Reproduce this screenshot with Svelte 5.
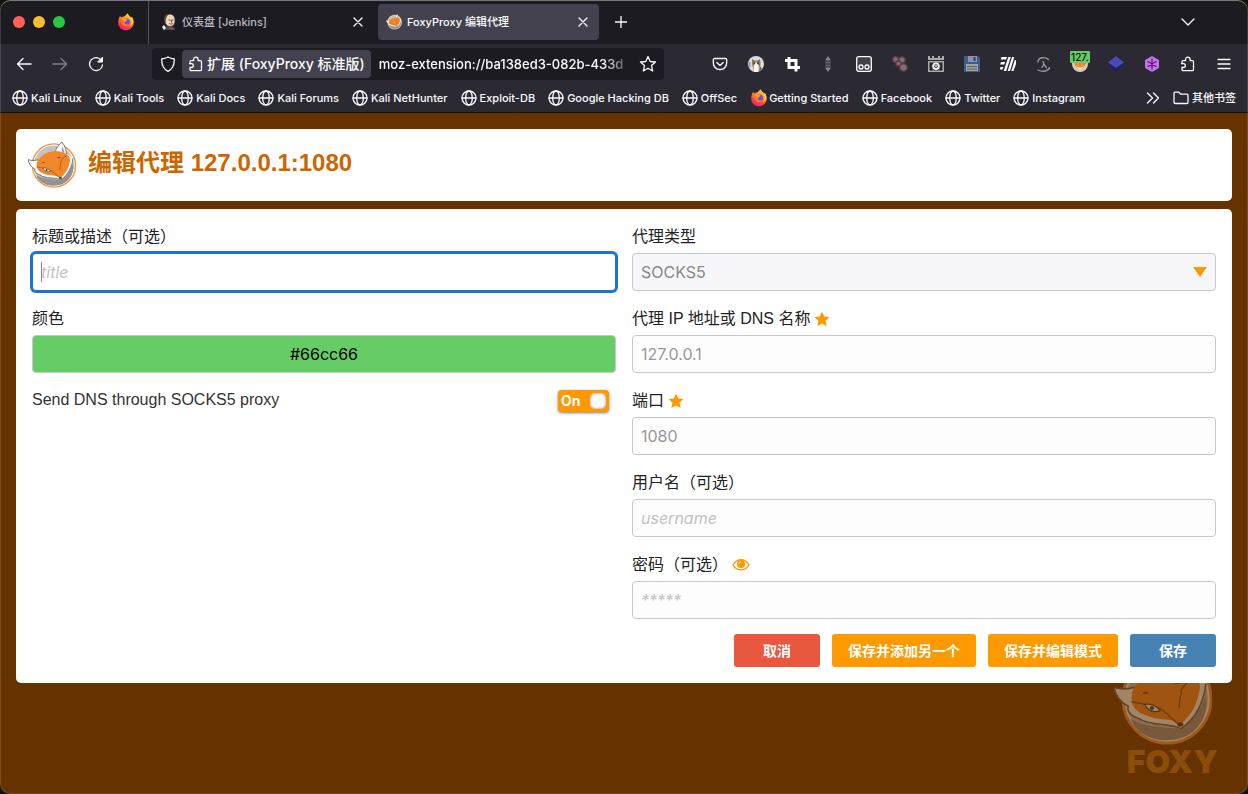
<script>
  const bookmarks = [
    'Kali Linux', 'Kali Tools', 'Kali Docs', 'Kali Forums', 'Kali NetHunter', 'Exploit-DB',
    'Google Hacking DB', 'OffSec', 'Getting Started', 'Facebook', 'Twitter', 'Instagram'
  ];
  const extensions = [
    'Pocket', 'Cat', 'Crop', 'Scroll', 'Container', 'Cookies', 'Capture', 'Save',
    'Wappalyzer', 'Lambda', 'FoxyProxy', 'Layers', 'Hexagon', 'Extensions', 'Menu'
  ];
  let title = $state('');
  let color = $state('#66cc66');
  let type = $state('SOCKS5');
  let host = $state('');
  let port = $state('');
  let username = $state('');
  let password = $state('');
  let dns = $state(true);
</script>

{#snippet fox(size)}
  <svg width={size} height={size} viewBox="0 0 48 48" aria-hidden="true">
    <circle cx="26" cy="24.500" r="21.600" fill="#fff" stroke="#f2923c" stroke-width="1.4" />
    <circle cx="26" cy="24.500" r="20" fill="#c3c3c6" />
    <path d="M8 34c6 4 14 4 24 5 6-3 11-9 13-17 2 11-5 22-17 22.500-9 1-17-3-20-10.500z" fill="#939397" />
    <path d="M10 19c4-5 10-9 17-9 2-4 4-7 7-9 3 4 4.500 8 4.500 12 3 1 4.500 3 6.500 4-1 9-5 17-12 22-6-3-15-1-21-5-3-2-5-3-5-6-3-1-6-4-7-9 3 1 7 1 10 0z" fill="#fff" />
    <path d="M0 18.700c3 1 7 1 10 0M0 18.700c1 5 4 8 7 9.300-1 3 2 5 5 6 6 4 15 2 21 5 7-5 11-13 12-22M27.300 10.500C29 6 31 3 34 1c3 4 4.500 8 4.500 12" fill="none" stroke="#5b5b60" stroke-width=".8" stroke-linejoin="round" />
    <path d="M34 5.500c2 2 2.500 5 2.500 8l-3-1z" fill="#aaaaae" />
    <path d="M9.500 19.500c4-5.500 10-9.500 17.500-9.500 5 0 9 1.500 12 3.500 2 1.500 3.500 3.500 3 6-1 7-4 13-9.500 17.500-4-3.500-11-1.500-17-4.500C8.500 30 7.500 25 9.500 19.500z" fill="#f5872b" />
    <path d="M8.500 26c3 0 5 .8 7.500 1.300M21 28.500c5 2 7 6 11 8.500M39 14.500c-2.500 1-4.500 3-6 5.500 0 3-1.500 6-1 9" fill="none" stroke="#8a4a20" stroke-width=".7" />
    <path d="M15 27.200c3-.7 6 .6 7.500 3-3 1.200-6 0-7.500-3z" fill="#fff" stroke="#4c3427" stroke-width=".6" />
    <circle cx="18.600" cy="28.900" r="1" fill="#333" />
    <ellipse cx="15.500" cy="21.500" rx="1.500" ry=".6" fill="#8a4a20" />
    <ellipse cx="31" cy="16.500" rx="1.600" ry=".7" fill="#8a4a20" />
    <ellipse cx="32.500" cy="37" rx="1.500" ry="1.100" fill="#4c3427" />
  </svg>
{/snippet}

{#snippet firefox()}
  <svg width="18" height="18" viewBox="0 0 18 18" aria-hidden="true">
    <defs>
      <linearGradient id="flame" x1=".8" y1="0" x2=".3" y2="1">
        <stop offset="0" stop-color="#ffe14a" /><stop offset=".45" stop-color="#ff8a1f" />
        <stop offset=".75" stop-color="#ff3b48" /><stop offset="1" stop-color="#e22079" />
      </linearGradient>
    </defs>
    <path d="M2 5c.3-.9.7-1.600 1.300-2.200.1.700.3 1.200.7 1.600 1-.6 2-.9 3-.9.800-.2 1.600-1.100 2-1.700C10 1 10.500.6 11 .4c.2 1.500 1 2.200 2.200 3.200.5.400.9 1 1.200 1.500l.1-1c1.600 1.600 2.500 4 2.300 6-.3 4-3.700 7.200-7.800 7.200S1.200 14 1.200 10C1.200 8 1.500 6.300 2 5z" fill="url(#flame)" />
    <path d="M10 1c2 2 4 3 4.500 6 .6 3-.5 5-2 6 4-1 4.500-6 2.500-9l-1 1C12 4 11 3 11 .4z" fill="#ffd83f" />
    <circle cx="9.300" cy="9" r="3.600" fill="#7b4be0" />
    <path d="M4 5c1.500-.8 3-.4 4 .6.700.7 1.700.6 2.600.8-1 1.400-2.400 1.300-2.900 2.700-.3 1.300.8 2.400 2.300 2.300 1 0 1.500-.6 2.300-.4-.8 1.600-2.500 2.400-4.200 2-2.500-.5-4.100-2.700-4.500-4.800z" fill="#ff7a27" />
    <path d="M5 5.500c1-.5 2.300-.2 3 .5l2.300.6C9.500 7.800 8.200 7.700 7.800 9z" fill="#ffb02e" />
  </svg>
{/snippet}

{#snippet puzzle()}
  <path d="M2 7V5.800C2 5.100 2.500 4.600 3.200 4.600H5.500V3.500a2.300 2.300 0 0 1 4.600 0v1.100h2.200c.7 0 1.200.5 1.200 1.200v7.700c0 .7-.5 1.200-1.200 1.200H3.200c-.7 0-1.200-.5-1.200-1.200v-2h1.500a1.900 1.900 0 0 0 0-3.800H1.500" />
{/snippet}

{#snippet star()}
  <svg width="16" height="16" viewBox="0 0 16 16" aria-label="必填" role="img">
    <path d="M8 .5l2.200 5 5.300.6-3.900 3.600 1.100 5.300L8 12.400 3.300 15l1.100-5.300L.5 6.100l5.300-.6z" fill="#f90" />
  </svg>
{/snippet}

<div class="window">
  <div class="tabstrip">
    <div class="lights"><i class="red"></i><i class="yellow"></i><i class="green"></i></div>
    <button class="view" aria-label="Firefox View">{@render firefox()}</button>
    <div class="tab">
      <svg width="16" height="16" viewBox="0 0 16 16" aria-hidden="true">
        <path d="M2 16c0-3 2-4 6-4s6 1 6 4z" fill="#335061" />
        <path d="M3.500 5c0-3 2-4.800 5-4.800S14 2 14 6s-1.500 6.500-5 6.500S3.500 9 3.500 5z" fill="#f0d6b7" stroke="#322" stroke-width=".6" />
        <path d="M3.500 7c-1-4 1-7 4.500-6.800C5.500 1.500 5.500 4 4.800 5.500V8z" fill="#5a4a3c" />
        <path d="M8 6h1.300M11.300 6h1M8.500 9.700c1 .7 2 .6 3 0M10.500 6.500v1.700" stroke="#332" stroke-width=".8" fill="none" />
        <path d="M8 13l2 1 2-1v2.500l-2-.8-2 .8z" fill="#d33833" /><path d="M1 13l2-2 2 3-2 2z" fill="#eee" />
      </svg>
      <span>仪表盘 [Jenkins]</span>
      <button aria-label="关闭标签页"><svg width="10" height="10" viewBox="0 0 10 10"><path d="M1 1l8 8M9 1L1 9" /></svg></button>
    </div>
    <div class="tab active">
      {@render fox(16)}
      <span>FoxyProxy 编辑代理</span>
      <button aria-label="关闭标签页"><svg width="10" height="10" viewBox="0 0 10 10"><path d="M1 1l8 8M9 1L1 9" /></svg></button>
    </div>
    <button class="new" aria-label="新建标签页"><svg width="12" height="12" viewBox="0 0 12 12"><path d="M6 0v12M0 6h12" /></svg></button>
    <button class="all" aria-label="列出所有标签页"><svg width="14" height="8" viewBox="0 0 14 8"><path d="M1 1l6 6 6-6" /></svg></button>
  </div>

  <nav class="toolbar">
    <button aria-label="后退"><svg width="16" height="16" viewBox="0 0 16 16"><path d="M15 8H1.500M7 2.500L1.500 8 7 13.500" /></svg></button>
    <button aria-label="前进" class="dim"><svg width="16" height="16" viewBox="0 0 16 16"><path d="M1 8h13.500M9 2.500L14.500 8 9 13.500" /></svg></button>
    <button aria-label="刷新"><svg width="16" height="16" viewBox="0 0 16 16"><path d="M13.500 4.500A6.500 6.500 0 1 0 14.500 9" /><path d="M14.500 1.500v4.500h-4.500z" fill="#fbfbfe" stroke-width="1" /></svg></button>
    <div class="urlbar">
      <svg width="16" height="16" viewBox="0 0 16 16"><path d="M8 1c2 1.200 4 1.700 6.300 2C14.500 9 13 13 8 15.300 3 13 1.500 9 1.700 3 4 2.700 6 2.200 8 1z" /></svg>
      <div class="identity"><svg width="16" height="16" viewBox="0 0 16 16">{@render puzzle()}</svg>扩展 (FoxyProxy 标准版)</div>
      <span class="address">moz-extension://ba138ed3-082b-433d</span>
      <svg width="18" height="18" viewBox="0 0 18 18"><path d="M9 1.500l2.200 5 5.300.5-4 3.600 1.200 5.400L9 13.200 4.300 16l1.200-5.400L1.500 7l5.300-.5z" /></svg>
    </div>
    <div class="extensions">
      {#each extensions as name}
        <button aria-label={name}>
          <svg width={name === 'FoxyProxy' ? 20 : 16} height="16" viewBox={name === 'FoxyProxy' ? '-2 0 20 16' : '0 0 16 16'}>
            {#if name === 'Pocket'}
              <path d="M2.500 2.500h11c.7 0 1.200.5 1.200 1.200V7a6.700 6.700 0 0 1-13.400 0V3.700c0-.7.5-1.200 1.200-1.200zM4.800 6.500L8 9.500l3.200-3" />
            {:else if name === 'Cat'}
              <g stroke="none"><circle cx="8" cy="8" r="8" fill="#dddcdc" /><path d="M4 3l2.500 1.500h3.500L12 3l.5 4c0 3-1 4-1.500 5l-1 3H6l-1-3C4 10 4 5 4 3z" fill="#8a7057" /><path d="M8 5l1.500 3 1.500 2-1 6H6l-.5-6L7 8z" fill="#f6f4f1" /><path d="M1 6c2-2 2 3 1 6-1-1-1.500-4-1-6z" fill="#9b9795" /><circle cx="6.300" cy="7.300" r=".7" fill="#222" /><circle cx="9.900" cy="7.300" r=".7" fill="#222" /><path d="M12 10l2 3-3 2z" fill="#6d5a49" /></g>
            {:else if name === 'Crop'}
              <path stroke="none" fill="#fbfbfe" fill-rule="evenodd" d="M1 3h2.500V1h3v2h7v7H16v3h-2.500v2.500h-3V13h-7V6H1zM6.500 6v4h4V6z" />
            {:else if name === 'Scroll'}
              <g stroke="none" fill="#85848c"><path d="M8 0l3 4.500H5zM8 16l3-4.500H5z" /><path d="M5.500 5.500h5v2h-5zM5.500 8.500h5v2h-5z" fill="#66656d" /></g>
            {:else if name === 'Container'}
              <rect x=".7" y=".7" width="14.600" height="14.600" rx="2" fill="#424148" /><circle cx="5" cy="11" r="2" /><circle cx="11" cy="11" r="2" />
            {:else if name === 'Cookies'}
              <g fill="#777078" style="stroke: #65394a"><circle cx="3.500" cy="3.500" r="2.800" /><circle cx="10" cy="4" r="3.200" /><circle cx="6.500" cy="7.500" r="2.500" /><circle cx="11.500" cy="11.500" r="3.700" /></g>
            {:else if name === 'Capture'}
              <g stroke="none"><path d="M0 4V0h2v2h2V0h2v2h4V0h2v2h2V0h2v4z" fill="#aaa" /><path fill-rule="evenodd" d="M0 5h16v11H0zM1.500 6.500v8h13v-8z" fill="#aaa" /></g><circle cx="8" cy="10.300" r="2.900" stroke-width="1.800" /><path d="M7 9.300l2 2M9 9.300l-2 2" stroke-width="1" />
            {:else if name === 'Save'}
              <g stroke="none"><path d="M0 0h14l2 2v14H0z" fill="#3f5c91" /><path d="M4 0h9v6H4z" fill="#8b96a8" /><path d="M9.500 1h2v4h-2z" fill="#293d65" /><path d="M2 8h12v7H2z" fill="#a4a39b" /><path d="M3 10h10v1H3zM3 12.500h10v1H3z" fill="#5d6167" /></g>
            {:else if name === 'Wappalyzer'}
              <g stroke="none" fill="#fbfbfe"><path d="M1.500 1h5.500l-1 2.500H.7zM1 6h4.200l-1 2.500H.2zM.5 11h3l-1 2.500H-.2z" /><path d="M8.300 1h2.500L6.200 15H3.700zM12 1h2.300L10 15H7.700zM14.800 4H16v4l-2.500 7h-2.200z" /></g>
            {:else if name === 'Lambda'}
              <g style="stroke: #9a99a1"><path d="M12.500 3.500C8.500 0 2 1.500 2 6M2 14c5 2.500 10.500 1 11.500-2.500M6 11.500L8 8l2.500 4M7 5.500L8 8" /></g>
            {:else if name === 'FoxyProxy'}
              <g stroke="none"><circle cx="8" cy="8" r="8" fill="#d7ccc0" /><path d="M2 7h12c-1 4-3 6-6 7-3-1-5-3-6-7z" fill="#f08a31" /><path d="M3 10l5 4 5-4-5 2z" fill="#fff" /></g>
            {:else if name === 'Layers'}
              <g stroke="none"><path d="M0 7l8 5 8-5v3l-8 6-8-6z" fill="#1d2460" /><path d="M8 0l8 6.500L8 12 0 6.500z" fill="#4a48b8" /></g>
            {:else if name === 'Hexagon'}
              <path d="M8 0l7 4v8l-7 4-7-4V4z" fill="#c56ff2" stroke="none" /><path d="M8 3v10M4 5.500l8 5M12 5.500l-8 5" style="stroke: #4e2670" />
            {:else if name === 'Extensions'}
              {@render puzzle()}
            {:else}
              <path d="M2 3.500h12M2 8h12M2 12.500h12" />
            {/if}
          </svg>
          {#if name === 'FoxyProxy'}<span class="badge">127.</span>{/if}
        </button>
      {/each}
    </div>
  </nav>

  <div class="bookmarks">
    {#each bookmarks as name}
      <a href="#{name}">
        {#if name === 'Getting Started'}
          <span class="mini">{@render firefox()}</span>
        {:else}
          <svg width="16" height="16" viewBox="0 0 16 16"><circle cx="8" cy="8" r="7" /><ellipse cx="8" cy="8" rx="3.300" ry="7" /><path d="M1 8h14" /></svg>
        {/if}
        {name}
      </a>
    {/each}
    <button class="more" aria-label="更多书签"><svg width="14" height="12" viewBox="0 0 14 12"><path d="M1.500 1l5 5-5 5M7.500 1l5 5-5 5" /></svg></button>
    <a href="#other"><svg width="16" height="16" viewBox="0 0 16 16"><path d="M1 3.500C1 2.700 1.500 2.200 2.300 2.200h3.500l2 2h5.900c.8 0 1.300.5 1.300 1.300v6.700c0 .8-.5 1.300-1.300 1.300H2.300c-.8 0-1.300-.5-1.300-1.300z" /></svg>其他书签</a>
  </div>

  <main>
    <div class="watermark" aria-hidden="true">{@render fox(98)}<span>FOXY</span></div>
    <header class="card">{@render fox(48)}<h1>编辑代理 127.0.0.1:1080</h1></header>
    <form class="card" onsubmit={(e) => e.preventDefault()}>
      <div class="columns">
        <div class="column">
          <div class="field"><label for="title">标题或描述（可选）</label><input id="title" class="focused" placeholder="title" bind:value={title} /></div>
          <div class="field"><label for="color">颜色</label><input id="color" class="color" style:background={color} bind:value={color} /></div>
          <div class="dns">
            <label for="dns">Send DNS through SOCKS5 proxy</label>
            <div class="switch"><input id="dns" type="checkbox" bind:checked={dns} /><span>{dns ? 'On' : 'Off'}</span></div>
          </div>
        </div>
        <div class="column">
          <div class="field"><label for="type">代理类型</label>
            <select id="type" bind:value={type}><option>SOCKS5</option><option>HTTP</option></select>
          </div>
          <div class="field"><label for="host">代理 IP 地址或 DNS 名称 {@render star()}</label><input id="host" class="sample" placeholder="127.0.0.1" bind:value={host} /></div>
          <div class="field"><label for="port">端口 {@render star()}</label><input id="port" class="sample" placeholder="1080" bind:value={port} /></div>
          <div class="field"><label for="username">用户名（可选）</label><input id="username" placeholder="username" bind:value={username} /></div>
          <div class="field"><label for="password">密码（可选）
            <svg width="18" height="14" viewBox="0 0 18 14" aria-hidden="true"><path d="M1 7c4-7 12-7 16 0-4 6.500-12 6.500-16 0z" fill="none" stroke="#f90" stroke-width="1.400" /><circle cx="9" cy="6" r="4" fill="#f90" /><path d="M7 6c0-1.300.8-2 2-2" fill="none" stroke="#fff" stroke-width=".8" /></svg>
          </label><input id="password" type="password" placeholder="*****" bind:value={password} /></div>
        </div>
      </div>
      <div class="actions">
        <button type="button" class="cancel">取消</button>
        <button type="button">保存并添加另一个</button>
        <button type="button">保存并编辑模式</button>
        <button type="submit" class="save">保存</button>
      </div>
    </form>
  </main>
</div>

<style>
  :global(body) { margin: 0; background: #111; }
  * { box-sizing: border-box; }
  button { font: inherit; color: inherit; background: none; border: 0; padding: 0; display: flex; align-items: center; justify-content: center; }
  svg { flex: none; }

  .window {
    position: relative; min-height: 100vh; display: flex; flex-direction: column; overflow: hidden;
    border-radius: 10px; background: #630; color: #fbfbfe;
    font: 500 11px/16px Inter, "Noto Sans CJK SC", sans-serif;
  }
  .window::after { content: ""; position: absolute; inset: 0; border-radius: 10px; pointer-events: none; box-shadow: inset 0 1px #77777b, inset 0 0 0 1px #ffffff22; }

  .tabstrip { display: flex; align-items: center; height: 44px; background: #1c1b22; }
  .tabstrip svg, .toolbar svg, .bookmarks > a > svg, .more svg { fill: none; stroke: #fbfbfe; stroke-width: 1.3; stroke-linecap: round; stroke-linejoin: round; }
  .tabstrip .view svg, .tabstrip .tab > svg { stroke: none; }
  .lights { display: flex; gap: 8px; padding-left: 13px; }
  .lights i { width: 12px; height: 12px; border-radius: 50%; }
  .red { background: #ff5f57; }
  .yellow { background: #febc2e; }
  .green { background: #28c840; }
  .view { width: 84px; height: 44px; padding-left: 38px; border-right: 1px solid #55545c; }
  .tab { display: flex; align-items: center; gap: 5px; width: 221px; height: 36px; padding: 0 8px; margin: 0 4px; color: #b9b8c0; border-radius: 4px; }
  .tab span { flex: 1; }
  .tab button { width: 16px; height: 16px; }
  .tab.active { margin: 0; background: #42414d; color: #fbfbfe; }
  .new { width: 44px; height: 36px; }
  .all { width: 36px; height: 36px; margin: 0 42px 0 auto; }

  .toolbar { display: flex; align-items: center; height: 40px; padding: 0 6px; background: #2b2a33; }
  .toolbar button { position: relative; width: 36px; height: 32px; }
  .dim { opacity: .4; }
  .urlbar { display: flex; align-items: center; flex: 1; min-width: 0; height: 32px; margin: 0 38px; padding: 0 7px 0 8px; border-radius: 4px; background: #1c1b22; font-size: 14px; }
  .identity { display: flex; align-items: center; gap: 3px; height: 28px; margin: 0 8px 0 6px; padding: 0 6px; border-radius: 4px; background: #42414d; white-space: nowrap; }
  .address { flex: 1; min-width: 0; margin-right: 6px; overflow: hidden; white-space: nowrap; font-size: 13px; mask-image: linear-gradient(to left, transparent, #000 30px); }
  .extensions { display: flex; }
  .badge { position: absolute; top: 3px; left: 8px; padding: 0 1px; border-radius: 1px; background: #6c6; color: #111; font-size: 10px; line-height: 12px; }

  .bookmarks { display: flex; align-items: center; gap: 13px; height: 29px; padding: 0 12px; background: #2b2a33; border-bottom: 1px solid #111; white-space: nowrap; }
  .bookmarks a { display: flex; align-items: center; gap: 3px; color: inherit; text-decoration: none; }
  .mini { display: flex; width: 16px; }
  .more { margin-left: auto; }

  main { position: relative; flex: 1; display: flex; flex-direction: column; gap: 8px; padding: 16px; color: #333; font: 16px/22px "Liberation Sans", "Noto Sans CJK SC", sans-serif; }
  .card { position: relative; border-radius: 5px; background: #fff; }
  header { display: flex; align-items: center; gap: 12px; height: 72px; padding: 0 12px; }
  h1 { margin: 0 0 4px; font-size: 24px; line-height: 28px; color: #c60; }
  form { padding: 16px; }
  .columns { display: grid; grid-template-columns: 1fr 1fr; gap: 16px; }
  .column, .field { display: flex; flex-direction: column; }
  .column { gap: 16px; }
  .field { gap: 4px; }
  .field label { display: flex; align-items: center; gap: 4px; height: 24px; color: #222; }
  .field input, select {
    width: 100%; height: 38px; margin: 0; padding: 0 8px; border: 1px solid #c8c8c8; border-radius: 4px; outline: 0;
    background: #fdfdfd; color: #888; font: 16px/22px Inter, sans-serif;
  }
  input::placeholder { color: #c2c2c2; font-style: italic; opacity: 1; }
  .sample::placeholder { color: #999; font-style: normal; }
  .field .focused { border-color: #1b72d0; box-shadow: 0 0 0 2px #1b72d0; background: linear-gradient(#888, #888) 8px center / 1px 20px no-repeat #fff; }
  .field .color { color: #000; text-align: center; }
  select { appearance: none; background: url("data:image/svg+xml,%3Csvg xmlns='http://www.w3.org/2000/svg' width='14' height='10'%3E%3Cpath d='M0 0h14L7 10z' fill='%23f90'/%3E%3C/svg%3E") right 8px center no-repeat #f6f6fb; }
  .dns { display: flex; align-items: flex-start; justify-content: space-between; padding-right: 7px; }
  .switch { display: grid; align-items: center; width: 51px; height: 22px; margin-top: 1px; color: #fff; font: 700 14px/22px Inter, sans-serif; }
  .switch > * { grid-area: 1 / 1; }
  .switch span { padding-left: 3px; pointer-events: none; }
  .switch input { display: flex; align-items: center; justify-content: flex-end; appearance: none; width: 100%; height: 22px; margin: 0; padding: 0 3px; border-radius: 4px; background: #f90; box-shadow: 0 1px 3px #0008; }
  .switch input::after { content: ""; width: 16px; height: 16px; border-radius: 5px; background: #fff; box-shadow: inset 0 0 3px #888; }
  .actions { display: flex; justify-content: flex-end; gap: 12px; margin-top: 15px; }
  .actions button { min-width: 86px; height: 33px; padding: 0 16px; border-radius: 3px; background: #f90; color: #fff; font-size: 14px; font-weight: 700; }
  .actions .cancel { background: #e9573f; }
  .actions .save { background: #4682b4; }
  .watermark { position: absolute; right: 30px; bottom: 17px; display: flex; flex-direction: column; align-items: flex-end; }
  .watermark :global(svg) { opacity: .4; margin-right: 6px; }
  .watermark span { color: #8a4d0c; font: 900 32px/30px Inter, sans-serif; }
</style>
